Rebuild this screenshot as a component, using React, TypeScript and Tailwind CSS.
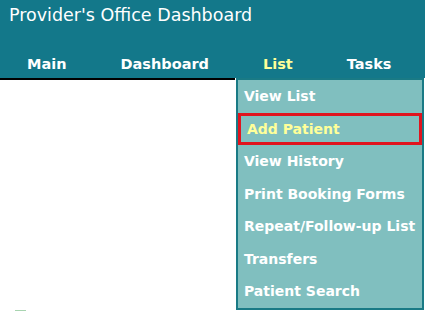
const navItems = ["Main", "Dashboard", "List", "Tasks"];

const listMenu = [
  "View List",
  "Add Patient",
  "View History",
  "Print Booking Forms",
  "Repeat/Follow-up List",
  "Transfers",
  "Patient Search",
];

export default function App() {
  return (
    <div className="w-[425px] h-[312px] bg-white overflow-hidden font-['DejaVu_Sans',Verdana,sans-serif]">
      <div className="h-[78px] bg-[#13788a] flex flex-col">
        <h1 className="pl-[9px] pt-[4px] text-[17.5px] leading-[22px] text-white">
          Provider's Office Dashboard
        </h1>
        <ul className="mt-auto flex h-[28px] items-center">
          {navItems.map((item) => (
            <li
              key={item}
              className={`relative px-[27px] text-[14.5px] font-bold leading-[28px] ${
                item === "List" ? "text-[#ffff99]" : "text-white"
              }`}
            >
              {item}
              {item === "List" && (
                <ul className="absolute left-0 top-[28px] z-10 w-[188px] border-2 border-[#197a85] bg-[#80bfbf]">
                  {listMenu.map((sub) => (
                    <li
                      key={sub}
                      className={`h-[32.5px] flex items-center pl-[6px] text-[14px] font-bold whitespace-nowrap ${
                        sub === "Add Patient"
                          ? "border-[3px] border-[#e0141e] pl-[3px] text-[#ffff99]"
                          : "text-white"
                      }`}
                    >
                      {sub}
                    </li>
                  ))}
                </ul>
              )}
            </li>
          ))}
        </ul>
      </div>
      <div className="h-[2px] w-[235px] bg-black" />
      <div className="ml-[15px] mt-[230px] h-[1px] w-[11px] bg-[#a8d4b0]" />
    </div>
  );
}
